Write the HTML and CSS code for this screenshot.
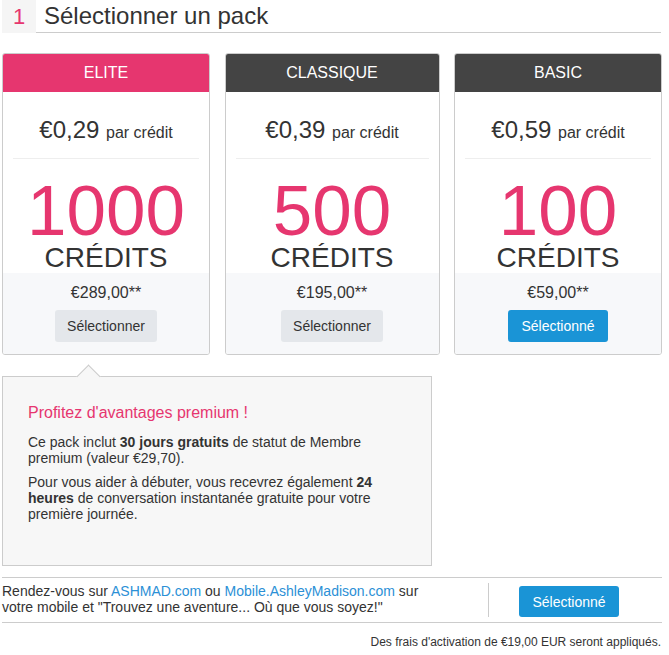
FILE: index.html
```html
<!DOCTYPE html>
<html lang="fr">
<head>
<meta charset="utf-8">
<title>Sélectionner un pack</title>
<link rel="stylesheet" href="styles.css">
</head>
<body>
<div class="page">
  <div class="step">
    <div class="step-num">1</div>
    <h1 class="step-title">Sélectionner un pack</h1>
  </div>

  <div class="packs">
    <div class="card">
      <div class="card-head head-pink">ELITE</div>
      <div class="card-rate">€0,29 <span class="rate-small">par crédit</span></div>
      <div class="card-amount">
        <div class="amount-num">1000</div>
        <div class="amount-label">CRÉDITS</div>
      </div>
      <div class="card-foot">
        <div class="foot-price">€289,00**</div>
        <button class="btn btn-gray">Sélectionner</button>
      </div>
    </div>
    <div class="card">
      <div class="card-head head-dark">CLASSIQUE</div>
      <div class="card-rate">€0,39 <span class="rate-small">par crédit</span></div>
      <div class="card-amount">
        <div class="amount-num">500</div>
        <div class="amount-label">CRÉDITS</div>
      </div>
      <div class="card-foot">
        <div class="foot-price">€195,00**</div>
        <button class="btn btn-gray">Sélectionner</button>
      </div>
    </div>
    <div class="card">
      <div class="card-head head-dark">BASIC</div>
      <div class="card-rate">€0,59 <span class="rate-small">par crédit</span></div>
      <div class="card-amount">
        <div class="amount-num">100</div>
        <div class="amount-label">CRÉDITS</div>
      </div>
      <div class="card-foot">
        <div class="foot-price">€59,00**</div>
        <button class="btn btn-blue">Sélectionné</button>
      </div>
    </div>
  </div>

  <div class="popover">
    <span class="popover-arrow"></span>
    <h2 class="popover-title">Profitez d'avantages premium !</h2>
    <p class="popover-text">Ce pack inclut <b>30 jours gratuits</b> de statut de Membre premium (valeur €29,70).</p>
    <p class="popover-text">Pour vous aider à débuter, vous recevrez également <b>24 heures</b> de conversation instantanée gratuite pour votre première journée.</p>
  </div>

  <div class="mobile-row">
    <div class="mobile-text">
      <p>Rendez-vous sur <a href="#" class="link">ASHMAD.com</a> ou <a href="#" class="link">Mobile.AshleyMadison.com</a> sur votre mobile et "Trouvez une aventure... Où que vous soyez!"</p>
    </div>
    <div class="mobile-action">
      <button class="btn btn-blue btn-footer">Sélectionné</button>
    </div>
  </div>

  <p class="note">Des frais d'activation de €19,00 EUR seront appliqués.</p>
</div>
</body>
</html>
```

FILE: styles.css
```css
* { box-sizing: border-box; }

html, body {
  margin: 0;
  padding: 0;
  background: #ffffff;
}

body {
  font-family: "Liberation Sans", Arial, sans-serif;
  color: #333333;
}

.page {
  width: 664px;
  padding: 0 2px;
}

/* Step header */
.step {
  display: flex;
  align-items: stretch;
  height: 33px;
  margin-right: 1px;
}

.step-num {
  width: 34px;
  background: #f5f5f5;
  color: #e6366f;
  font-size: 22px;
  line-height: 33px;
  text-align: center;
}

.step-title {
  flex: 1;
  margin: 0;
  padding-left: 8px;
  font-size: 24px;
  font-weight: normal;
  line-height: 32px;
  color: #333333;
  border-bottom: 1px solid #cccccc;
}

/* Packs */
.packs {
  display: grid;
  grid-template-columns: 208px 215px 208px;
  column-gap: 14.5px;
  margin-top: 20px;
}

.card {
  border: 1px solid #cccccc;
  border-radius: 3px;
  text-align: center;
  overflow: hidden;
  background: #ffffff;
}

.card-head {
  height: 38px;
  line-height: 38px;
  font-size: 16px;
  color: #ffffff;
}

.head-pink { background: #e6366f; }
.head-dark { background: #444444; }

.card-rate {
  height: 67px;
  margin: 0 10px;
  padding-top: 24px;
  font-size: 24px;
  line-height: 28px;
  color: #333333;
  border-bottom: 1px solid #eeeeee;
}

.rate-small {
  font-size: 16px;
  line-height: 16px;
}

.card-amount {
  padding-top: 16px;
  height: 114px;
}

.amount-num {
  font-size: 71px;
  line-height: 71px;
  color: #e6366f;
}

.amount-label {
  font-size: 28px;
  line-height: 24px;
  color: #333333;
}

.card-foot {
  background: #f7f8fa;
  padding: 10px 0 12px;
}

.foot-price {
  font-size: 16px;
  line-height: 20px;
  color: #333333;
  margin-bottom: 7px;
}

.btn {
  font-family: "Liberation Sans", Arial, sans-serif;
  font-size: 14px;
  border: 0;
  border-radius: 3px;
  height: 32px;
  padding: 0 12px;
  cursor: pointer;
}

.btn-gray {
  background: #e4e7eb;
  color: #333333;
}

.btn-blue {
  background: #1a94d6;
  color: #ffffff;
  padding: 0 13px;
}

/* Popover */
.popover {
  position: relative;
  width: 430px;
  height: 190px;
  margin-top: 21px;
  padding: 26px 25px 0;
  background: #f7f7f7;
  border: 1px solid #cccccc;
}

.popover-arrow {
  position: absolute;
  top: -9px;
  left: 77px;
  width: 17px;
  height: 17px;
  background: #f7f7f7;
  border-top: 1px solid #cccccc;
  border-left: 1px solid #cccccc;
  transform: rotate(45deg);
}

.popover-title {
  margin: 0 0 11px;
  font-size: 16px;
  font-weight: normal;
  line-height: 20px;
  color: #e6366f;
}

.popover-text {
  margin: 0 0 8px;
  font-size: 14px;
  line-height: 16px;
  color: #333333;
}

/* Mobile row */
.mobile-row {
  display: flex;
  margin-top: 11px;
  padding: 5px 0;
  border-top: 1px solid #cccccc;
  border-bottom: 1px solid #cccccc;
}

.mobile-text {
  width: 487px;
  padding-bottom: 2px;
  border-right: 1px solid #cccccc;
}

.mobile-text p {
  margin: 0;
  width: 440px;
  font-size: 14px;
  line-height: 16px;
  color: #333333;
}

.link {
  color: #2b90d6;
  text-decoration: none;
}

.mobile-action {
  flex: 1;
  padding: 3px 0 0 30px;
}

.btn-footer {
  width: 100px;
  height: 31px;
  padding: 0;
}

.note {
  margin: 12px 1px 0 0;
  text-align: right;
  font-size: 12px;
  line-height: 14px;
  color: #333333;
}
```
